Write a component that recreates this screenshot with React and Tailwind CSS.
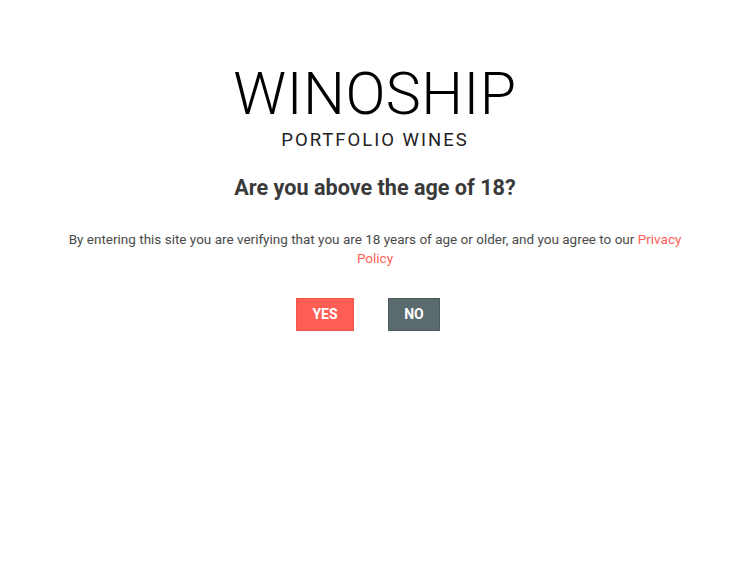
import React from "react";

export default function App() {
  return (
    <div className="min-h-screen bg-white font-['Roboto',sans-serif] flex flex-col items-center pt-[58px]">
      {/* Logo */}
      <div className="flex flex-col items-center">
        <div className="text-[59px] leading-[72px] font-light text-black tracking-[0.5px]">WINOSHIP</div>
        <div className="text-[18.5px] leading-[22px] font-normal text-[#222] tracking-[2px] mt-[-1px]">PORTFOLIO WINES</div>
      </div>

      {/* Heading */}
      <h1 className="mt-[22px] text-[21.6px] leading-[30px] font-bold text-[#3a3a3a]">Are you above the age of 18?</h1>

      {/* Notice */}
      <p className="mt-[27px] w-[632px] text-center text-[13.5px] leading-[19px] text-[#4a4a4a]">
        By entering this site you are verifying that you are 18 years of age or older, and you agree to our{" "}
        <a href="#" className="text-[#ff6258]">Privacy Policy</a>
      </p>

      {/* Buttons */}
      <div className="mt-[30px] flex gap-[34px] pr-[14px]">
        <button className="w-[58px] h-[33px] bg-[#ff5e55] border border-[#f0554c] text-white text-[14px] font-bold">YES</button>
        <button className="w-[52px] h-[33px] bg-[#5b6b6d] border border-[#4d5b5d] text-white text-[14px] font-bold">NO</button>
      </div>
    </div>
  );
}
